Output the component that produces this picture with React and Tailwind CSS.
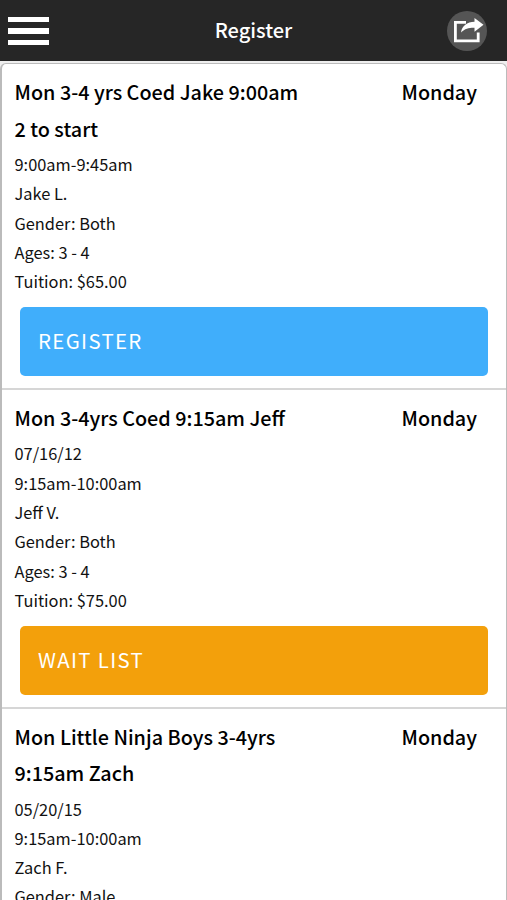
const classes = [
  {
    title: 'Mon 3-4 yrs Coed Jake 9:00am 2 to start',
    day: 'Monday',
    details: ['9:00am-9:45am', 'Jake L.', 'Gender: Both', 'Ages: 3 - 4', 'Tuition: $65.00'],
    action: 'REGISTER',
    color: 'bg-[#40aefb]',
  },
  {
    title: 'Mon 3-4yrs Coed 9:15am Jeff',
    day: 'Monday',
    details: ['07/16/12', '9:15am-10:00am', 'Jeff V.', 'Gender: Both', 'Ages: 3 - 4', 'Tuition: $75.00'],
    action: 'WAIT LIST',
    color: 'bg-[#f3a00b]',
  },
  {
    title: 'Mon Little Ninja Boys 3-4yrs 9:15am Zach',
    day: 'Monday',
    details: ['05/20/15', '9:15am-10:00am', 'Zach F.', 'Gender: Male'],
  },
];

function ShareIcon() {
  return (
    <svg viewBox="0 0 40 40" className="h-10 w-10">
      <circle cx="20" cy="20" r="20" fill="#555" />
      <path d="M19 11.400H8.400v18.400H31.200v-8.300" fill="none" stroke="#fff" strokeWidth="2.800" />
      <path d="M14 21.500C15 14.500 20 11 27.500 10.700V7l9 6.700-9 7V16.800C22 16.700 18 17.600 14 21.500z" fill="#fff" />
    </svg>
  );
}

function Header() {
  return (
    <header className="flex h-[61px] shrink-0 items-center justify-between bg-[#262626] pl-2 pr-5">
      <button aria-label="Menu" className="mt-px flex w-[41px] flex-col gap-[6px]">
        <span className="h-[5.6px] w-[41px] bg-white" />
        <span className="h-[5.6px] w-[41px] bg-white" />
        <span className="h-[5.6px] w-[41px] bg-white" />
      </button>
      <h1 className="mb-px ml-[11px] text-[20px] font-medium text-white">Register</h1>
      <button aria-label="Share">
        <ShareIcon />
      </button>
    </header>
  );
}

function ClassRow({ item }) {
  return (
    <li className="border-b-2 border-[#d6d6d6] pb-[11.9px] pl-3 pr-[18px] pt-[10px]">
      <div className="flex items-start justify-between pl-[0.5px] pr-[11px] text-[19.8px] font-medium leading-[36.5px]">
        <h2 className="w-[290px]">{item.title}</h2>
        <span>{item.day}</span>
      </div>
      <div className="mt-[3px] pl-[0.5px] text-[16.4px] leading-[29.3px] text-[#111]">
        {item.details.map((line) => (
          <p key={line}>{line}</p>
        ))}
      </div>
      {item.action && (
        <button
          className={`ml-[6px] mt-[11px] flex h-[68.5px] w-[468px] items-center rounded-[5px] pb-[2px] pl-[18px] text-[20.4px] tracking-[1.35px] text-white ${item.color}`}
        >
          {item.action}
        </button>
      )}
    </li>
  );
}

export default function App() {
  return (
    <div className="flex h-[900px] w-[507px] flex-col overflow-hidden bg-[#eee] font-['Noto_Sans_CJK_SC',sans-serif] text-black">
      <Header />
      <ul className="mt-[2px] w-[507px] rounded-t-[6px] border-l-2 border-r border-t border-[#bbb] bg-white">
        {classes.map((item) => (
          <ClassRow key={item.title} item={item} />
        ))}
      </ul>
    </div>
  );
}
